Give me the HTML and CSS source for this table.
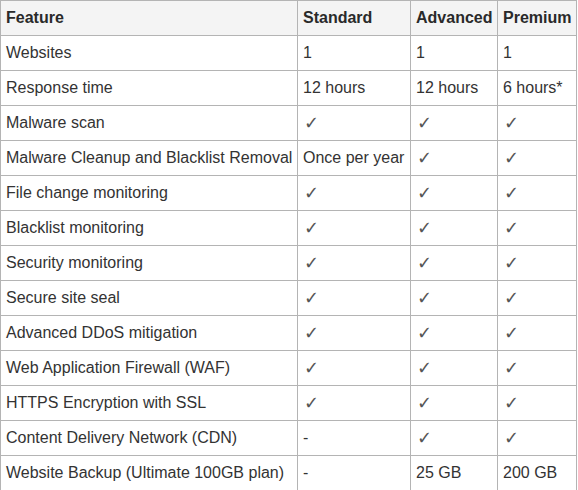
FILE: index.html
```html
<!DOCTYPE html>
<html>
<head>
<meta charset="utf-8">
<link rel="stylesheet" href="styles.css">
</head>
<body>
<table class="plans">
  <colgroup>
    <col class="c-feature">
    <col class="c-standard">
    <col class="c-advanced">
    <col class="c-premium">
  </colgroup>
  <thead>
    <tr><th>Feature</th><th>Standard</th><th>Advanced</th><th>Premium</th></tr>
  </thead>
  <tbody>
    <tr><td>Websites</td><td>1</td><td>1</td><td>1</td></tr>
    <tr><td>Response time</td><td>12 hours</td><td>12 hours</td><td>6 hours*</td></tr>
    <tr><td>Malware scan</td><td class="chk">✓</td><td class="chk">✓</td><td class="chk">✓</td></tr>
    <tr><td>Malware Cleanup and Blacklist Removal</td><td>Once per year</td><td class="chk">✓</td><td class="chk">✓</td></tr>
    <tr><td>File change monitoring</td><td class="chk">✓</td><td class="chk">✓</td><td class="chk">✓</td></tr>
    <tr><td>Blacklist monitoring</td><td class="chk">✓</td><td class="chk">✓</td><td class="chk">✓</td></tr>
    <tr><td>Security monitoring</td><td class="chk">✓</td><td class="chk">✓</td><td class="chk">✓</td></tr>
    <tr><td>Secure site seal</td><td class="chk">✓</td><td class="chk">✓</td><td class="chk">✓</td></tr>
    <tr><td>Advanced DDoS mitigation</td><td class="chk">✓</td><td class="chk">✓</td><td class="chk">✓</td></tr>
    <tr><td>Web Application Firewall (WAF)</td><td class="chk">✓</td><td class="chk">✓</td><td class="chk">✓</td></tr>
    <tr><td>HTTPS Encryption with SSL</td><td class="chk">✓</td><td class="chk">✓</td><td class="chk">✓</td></tr>
    <tr><td>Content Delivery Network (CDN)</td><td>-</td><td class="chk">✓</td><td class="chk">✓</td></tr>
    <tr><td>Website Backup (Ultimate 100GB plan)</td><td>-</td><td>25 GB</td><td>200 GB</td></tr>
  </tbody>
</table>
</body>
</html>
```
FILE: styles.css
```css
html, body {
  margin: 0;
  padding: 0;
  background: #ffffff;
}
.plans {
  border-collapse: collapse;
  table-layout: fixed;
  width: 577px;
  font-family: "Liberation Sans", Arial, sans-serif;
  font-size: 16px;
  color: #333333;
}
.c-feature { width: 297px; }
.c-standard { width: 113px; }
.c-advanced { width: 87px; }
.c-premium { width: 79px; }
.plans th,
.plans td {
  border: 1px solid #b4b4b4;
  height: 35px;
  padding: 0 5px;
  text-align: left;
  vertical-align: middle;
  white-space: nowrap;
  box-sizing: border-box;
  line-height: 18px;
}
.plans thead th {
  background: #f4f4f4;
  font-weight: bold;
  color: #2a2a2a;
}
.plans td.chk {
  font-family: "DejaVu Sans", sans-serif;
  font-size: 18px;
  font-weight: 300;
  color: #555555;
  padding-left: 6px;
}
```
